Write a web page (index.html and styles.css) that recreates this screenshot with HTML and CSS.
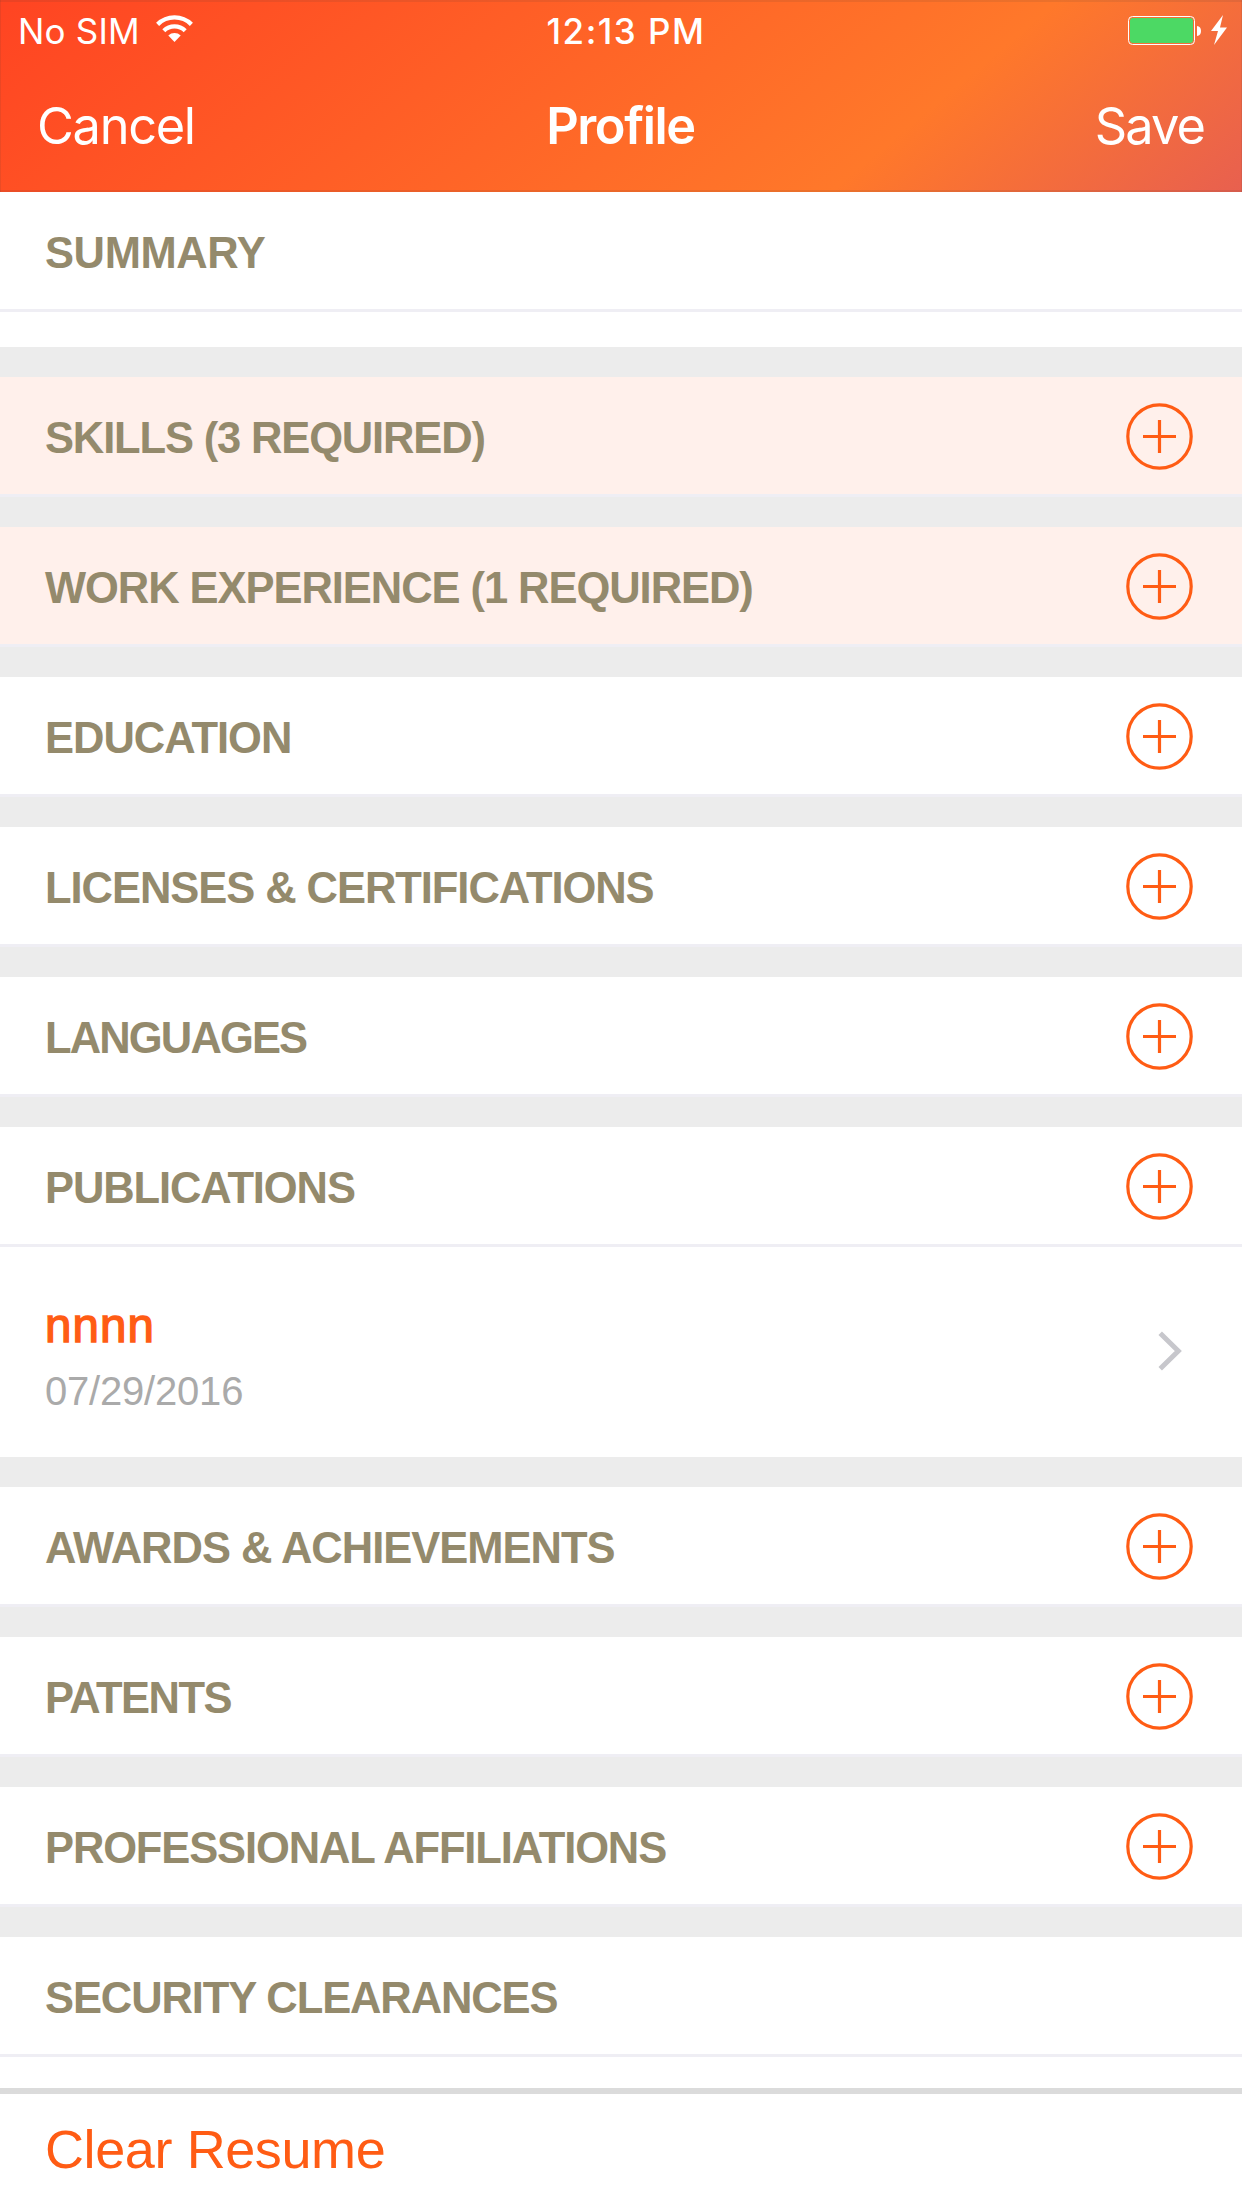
FILE: index.html
```html
<!DOCTYPE html>
<html lang="en">
<head>
<meta charset="utf-8">
<title>Profile</title>
<link rel="stylesheet" href="styles.css">
</head>
<body>
<svg width="0" height="0" class="defs" aria-hidden="true">
  <symbol id="add" viewBox="0 0 67 67"><g fill="none" stroke="#ff5c14" stroke-width="3.2"><circle cx="33.5" cy="33.5" r="31.7"/><path d="M17 33.5H50M33.5 17V50"/></g></symbol>
</svg>
<header class="top">
  <div class="status">
    <div class="carrier"><span>No SIM</span>
      <svg width="37" height="28" viewBox="0 0 37 28"><g fill="none" stroke="#fff" stroke-width="4.3"><path d="M1.6 9.4A24 24 0 0 1 35.4 9.4"/><path d="M7.8 15.7A15.4 15.4 0 0 1 29.2 15.7"/></g><path fill="#fff" d="M12.3 20.4A9.5 9.5 0 0 1 24.7 20.4L18.5 27Z"/></svg>
    </div>
    <div class="clock">12:13 PM</div>
    <div class="power">
      <svg width="101" height="32" viewBox="0 0 101 32"><rect x="2.5" y="2.5" width="66" height="28" rx="4" fill="none" stroke="#fff"/><rect x="4" y="4" width="63" height="25" rx="3" fill="#4cd964"/><path fill="#fff" d="M71 12Q75 12.500 75 17Q75 21.500 71 22Z"/><path fill="#fff" d="M97 1L85 17H92L88 31L101 13.500H94Z"/></svg>
    </div>
  </div>
  <nav class="nav"><a class="cancel">Cancel</a><h1>Profile</h1><a class="save">Save</a></nav>
</header>
<main>
  <section><div class="row"><h2 class="summary">SUMMARY</h2></div><div class="blank"></div></section>
  <section><div class="row required"><h2 class="skills">SKILLS (3 REQUIRED)</h2><svg class="add"><use href="#add"/></svg></div></section>
  <section><div class="row required"><h2 class="work">WORK EXPERIENCE (1 REQUIRED)</h2><svg class="add"><use href="#add"/></svg></div></section>
  <section><div class="row"><h2 class="education">EDUCATION</h2><svg class="add"><use href="#add"/></svg></div></section>
  <section><div class="row"><h2 class="licenses">LICENSES &amp; CERTIFICATIONS</h2><svg class="add"><use href="#add"/></svg></div></section>
  <section><div class="row"><h2 class="languages">LANGUAGES</h2><svg class="add"><use href="#add"/></svg></div></section>
  <section><div class="row"><h2 class="publications">PUBLICATIONS</h2><svg class="add"><use href="#add"/></svg></div>
    <div class="entry"><div><div class="name">nnnn</div><div class="date">07/29/2016</div></div>
      <svg class="chevron" width="24" height="40" viewBox="0 0 24 40"><path d="M2.200 2.200L20.300 20L2.200 37.800" fill="none" stroke="#c7c7cc" stroke-width="5"/></svg></div></section>
  <section><div class="row"><h2 class="awards">AWARDS &amp; ACHIEVEMENTS</h2><svg class="add"><use href="#add"/></svg></div></section>
  <section><div class="row"><h2 class="patents">PATENTS</h2><svg class="add"><use href="#add"/></svg></div></section>
  <section><div class="row"><h2 class="affiliations">PROFESSIONAL AFFILIATIONS</h2><svg class="add"><use href="#add"/></svg></div></section>
  <section><div class="row"><h2 class="security">SECURITY CLEARANCES</h2></div></section>
</main>
<footer><a>Clear Resume</a></footer>
</body>
</html>
```
FILE: styles.css
```css
* { box-sizing: border-box; }
body { margin: 0; width: 1242px; height: 2208px; overflow: hidden; display: flex; flex-direction: column; background: #fff; font-family: "Liberation Sans", Arial, sans-serif; }
h1, h2 { margin: 0; white-space: nowrap; }
svg { display: block; flex: none; }
.defs { display: none; }
.top { flex: none; height: 192px; color: #fff; font-family: Inter, sans-serif; background: linear-gradient(140deg, #ff4422 0%, #ff782a 72%, #e8604f 100%); box-shadow: inset 0 2px rgba(60,60,60,.1), inset 0 -2px rgba(60,60,60,.1), inset 1px 0 rgba(60,60,60,.1), inset -1px 0 rgba(60,60,60,.1); }
.status { display: grid; grid-template-columns: 1fr auto 1fr; height: 60px; padding: 0 15px 0 18px; font-size: 35px; line-height: 62px; }
.carrier { display: flex; gap: 16px; letter-spacing: .2px; }
.carrier svg { margin-top: 15px; }
.clock { padding-left: 7px; font-weight: 500; letter-spacing: 1.5px; }
.power { display: flex; justify-content: flex-end; padding-top: 14px; }
.nav { display: grid; grid-template-columns: 1fr auto 1fr; height: 132px; padding: 0 38px 0 37px; font-size: 50.5px; line-height: 131px; letter-spacing: -1.3px; }
.nav h1 { font-size: inherit; font-weight: 600; letter-spacing: -1.4px; }
.save { text-align: right; letter-spacing: -1.9px; }
main { flex: 1; min-height: 0; overflow: hidden; display: flex; flex-direction: column; gap: 30px; background: #ececec; }
section { flex: none; background: #fff; }
section:last-child { flex: 1; }
.row { display: flex; justify-content: space-between; height: 120px; padding: 0 49px 0 45px; border-bottom: 3px solid #efeef4; }
.required { background: #fff0eb; }
.blank { height: 35px; }
h2 { color: #948a6c; font-size: 43.5px; line-height: 123px; letter-spacing: -1px; }
.summary { letter-spacing: -.4px; }
.skills { letter-spacing: -1.15px; }
.work, .licenses { letter-spacing: -1.05px; }
.languages { letter-spacing: -1.85px; }
.publications, .security { letter-spacing: -1.1px; }
.patents { letter-spacing: -1.5px; }
.affiliations { letter-spacing: -1.13px; }
.add { width: 67px; height: 67px; margin-top: 26px; }
.entry { display: flex; justify-content: space-between; height: 210px; padding: 49px 60px 0 45px; }
.name { color: #ff5c14; font-size: 47.5px; line-height: 60px; letter-spacing: 1.1px; -webkit-text-stroke: 1.4px #ff5c14; }
.date { color: #aaa; font-size: 40px; line-height: 70px; letter-spacing: -.2px; }
.chevron { margin-top: 35px; }
footer { flex: none; height: 120px; padding-left: 45px; border-top: 6px solid #dbdbdb; color: #ff5c14; font-size: 54px; line-height: 110px; letter-spacing: -.4px; }
```
